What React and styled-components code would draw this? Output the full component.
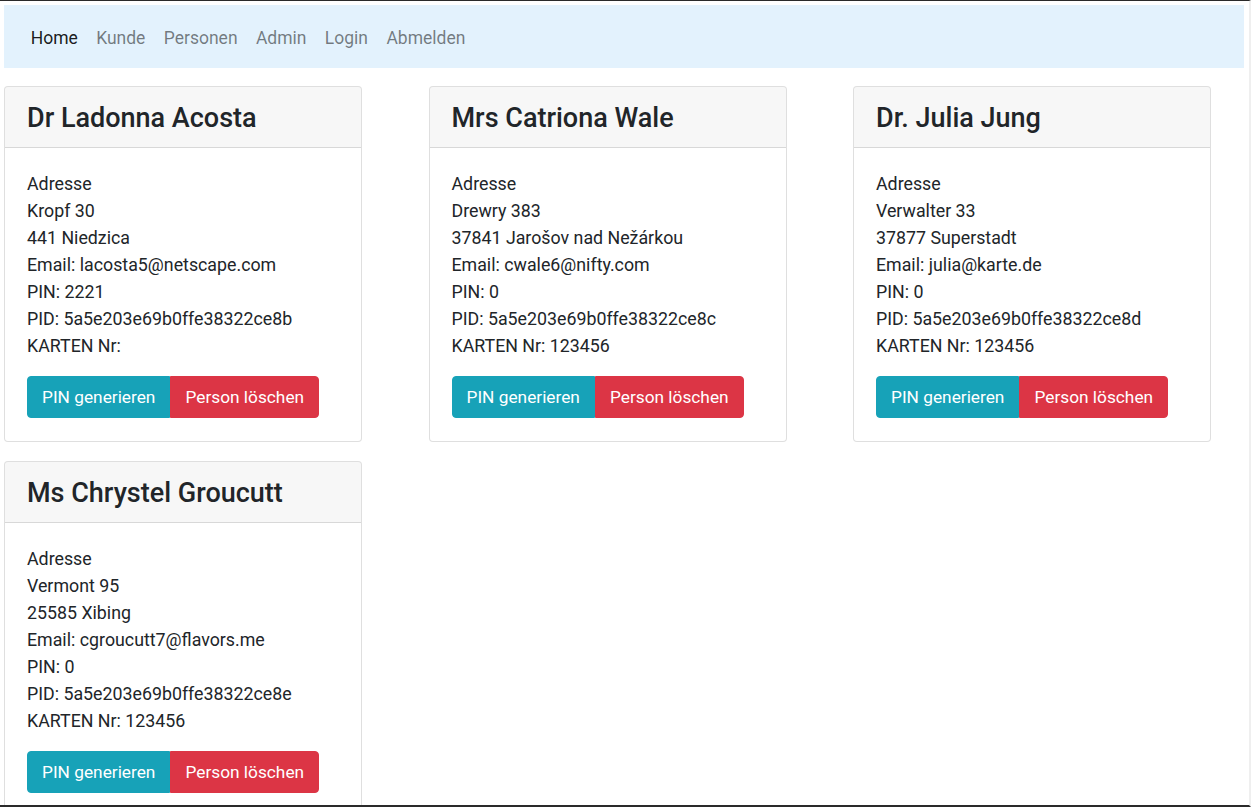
import React from "react";
import styled, { createGlobalStyle } from "styled-components";

const Global = createGlobalStyle`
  * { box-sizing: border-box; }
  html, body { margin: 0; padding: 0; background: #fff; }
  body {
    font-family: Roboto, "Liberation Sans", Arial, sans-serif;
    font-size: 17.8px;
    color: #212529;
  }
`;

const Frame = styled.div`
  height: 807px;
  overflow: hidden;
  border-top: 1px solid #2a2a2a;
  border-bottom: 2px solid #2a2a2a;
  border-right: 2px solid #efefef;
  padding: 4px 5px 0 4px;
`;

const NavBar = styled.nav`
  height: 63px;
  background: #e3f2fd;
  display: flex;
  align-items: center;
  padding: 3px 17px 0 17.5px;
`;

const NavLink = styled.a`
  padding: 0 9.2px;
  line-height: 27px;
  font-size: 17.5px;
  text-decoration: none;
  color: ${(p) => (p.$active ? "rgba(0,0,0,0.9)" : "rgba(0,0,0,0.5)")};
  cursor: pointer;
`;

const Grid = styled.div`
  display: grid;
  grid-template-columns: repeat(3, 358px);
  column-gap: 66.5px;
  row-gap: 19px;
  margin-top: 18px;
  align-items: start;
`;

const Card = styled.div`
  border: 1px solid rgba(0, 0, 0, 0.125);
  border-radius: 4px;
  background: #fff;
  overflow: hidden;
`;

const CardHeader = styled.div`
  background: rgba(0, 0, 0, 0.03);
  border-bottom: 1px solid rgba(0, 0, 0, 0.125);
  padding: 15px 20px 0 22px;
  height: 61px;
`;

const Title = styled.h3`
  margin: 0;
  font-size: 27px;
  font-weight: 500;
  line-height: 32px;
  color: #212529;
`;

const CardBody = styled.div`
  padding: 22px 20px 23px 22px;
`;

const Line = styled.div`
  line-height: 27px;
  font-size: 17.8px;
`;

const Lines = styled.div`
  margin-bottom: 17px;
`;

const BtnGroup = styled.div`
  display: inline-flex;
`;

const Btn = styled.button`
  font-family: inherit;
  font-size: 17.3px;
  line-height: 24px;
  padding: 8px 14px;
  border: 1px solid ${(p) => p.$bg};
  background: ${(p) => p.$bg};
  color: #fff;
  cursor: pointer;
  border-radius: ${(p) => (p.$first ? "4px 0 0 4px" : "0 4px 4px 0")};
`;

const people = [
  {
    name: "Dr Ladonna Acosta",
    street: "Kropf 30",
    city: "441 Niedzica",
    email: "lacosta5@netscape.com",
    pin: "2221",
    pid: "5a5e203e69b0ffe38322ce8b",
    karte: "",
  },
  {
    name: "Mrs Catriona Wale",
    street: "Drewry 383",
    city: "37841 Jarošov nad Nežárkou",
    email: "cwale6@nifty.com",
    pin: "0",
    pid: "5a5e203e69b0ffe38322ce8c",
    karte: "123456",
  },
  {
    name: "Dr. Julia Jung",
    street: "Verwalter 33",
    city: "37877 Superstadt",
    email: "julia@karte.de",
    pin: "0",
    pid: "5a5e203e69b0ffe38322ce8d",
    karte: "123456",
  },
  {
    name: "Ms Chrystel Groucutt",
    street: "Vermont 95",
    city: "25585 Xibing",
    email: "cgroucutt7@flavors.me",
    pin: "0",
    pid: "5a5e203e69b0ffe38322ce8e",
    karte: "123456",
  },
];

const navItems = ["Home", "Kunde", "Personen", "Admin", "Login", "Abmelden"];

export default function App() {
  return (
    <>
      <Global />
      <Frame>
        <NavBar>
          {navItems.map((n, i) => (
            <NavLink key={n} $active={i === 0}>
              {n}
            </NavLink>
          ))}
        </NavBar>
        <Grid>
          {people.map((p) => (
            <Card key={p.pid}>
              <CardHeader>
                <Title>{p.name}</Title>
              </CardHeader>
              <CardBody>
                <Lines>
                  <Line>Adresse</Line>
                  <Line>{p.street}</Line>
                  <Line>{p.city}</Line>
                  <Line>Email: {p.email}</Line>
                  <Line>PIN: {p.pin}</Line>
                  <Line>PID: {p.pid}</Line>
                  <Line>KARTEN Nr: {p.karte}</Line>
                </Lines>
                <BtnGroup>
                  <Btn $first $bg="#17a2b8">PIN generieren</Btn>
                  <Btn $bg="#dc3545">Person löschen</Btn>
                </BtnGroup>
              </CardBody>
            </Card>
          ))}
        </Grid>
      </Frame>
    </>
  );
}
